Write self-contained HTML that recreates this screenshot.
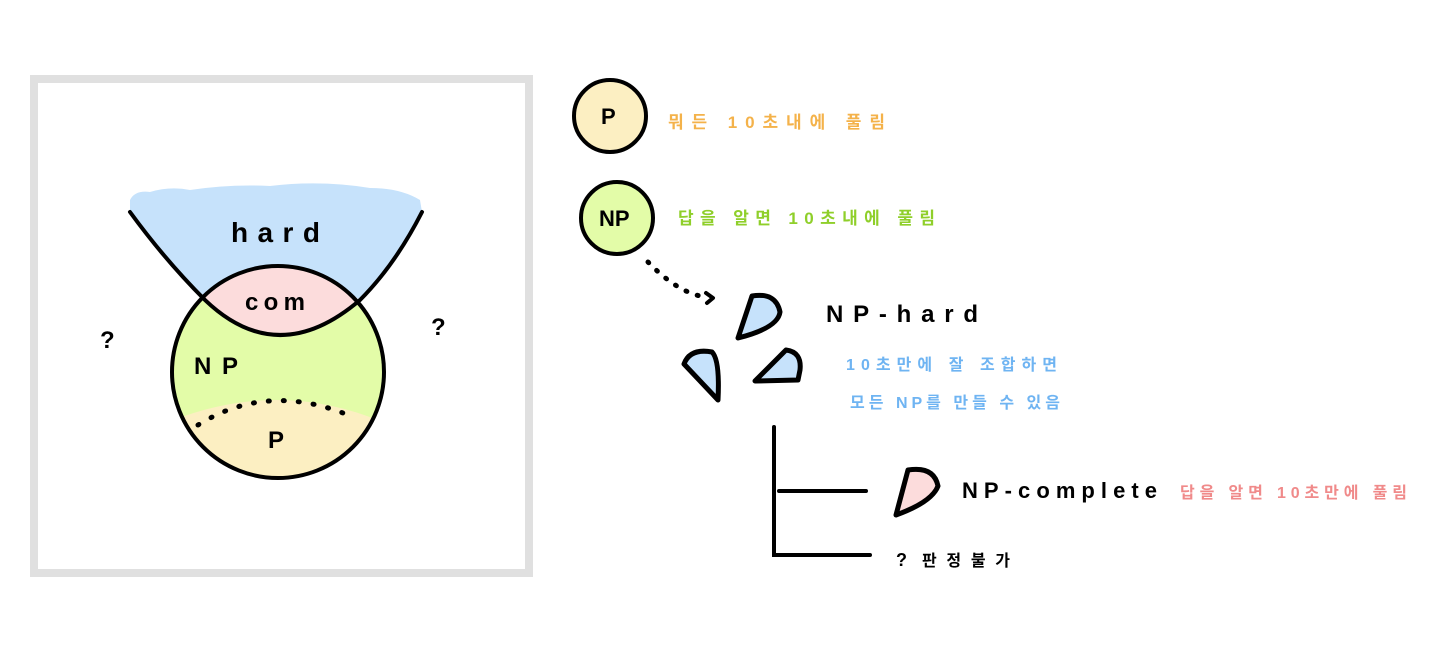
<!DOCTYPE html>
<html><head><meta charset="utf-8"><style>
html,body{margin:0;padding:0;background:#fff;width:1440px;height:657px;overflow:hidden}
svg{display:block}
text{font-family:"Liberation Sans","Noto Sans CJK KR",sans-serif;font-weight:bold}
</style></head><body>
<svg width="1440" height="657" viewBox="0 0 1440 657">
<rect x="34" y="79" width="495" height="494" fill="none" stroke="#e0e0e0" stroke-width="8"/>
<defs><clipPath id="c"><circle cx="278" cy="372" r="106"/></clipPath></defs>
<path d="M130 200 Q135 190 150 192 Q170 186 190 190 Q230 184 270 186 Q320 180 370 188 Q400 188 420 200 L422 212 Q390 270 360 300 Q320 270 278 266 Q236 266 205 300 Q160 250 130 212 Z" fill="#c6e2fb"/>
<circle cx="278" cy="372" r="106" fill="#e3fca8"/>
<g clip-path="url(#c)">
<path d="M150 430 Q278 370 400 430 L400 500 L150 500 Z" fill="#fcefc2"/>
<path d="M150 250 L205 300 Q278 370 360 300 L420 250 Z" fill="#fcdcdc"/>
</g>
<circle cx="278" cy="372" r="106" fill="none" stroke="#000" stroke-width="4"/>
<path d="M130 212 Q165 260 205 300 Q278 370 360 300 Q395 265 422 212" fill="none" stroke="#000" stroke-width="4" stroke-linecap="round"/>
<path d="M198 425 Q270 380 355 418" fill="none" stroke="#000" stroke-width="5" stroke-dasharray="1 14" stroke-linecap="round"/>
<text x="231" y="242" font-size="28" textLength="89" lengthAdjust="spacing">hard</text>
<text x="245" y="310" font-size="24" textLength="60" lengthAdjust="spacing">com</text>
<text x="194" y="374" font-size="24" textLength="44" lengthAdjust="spacing">NP</text>
<text x="268" y="448" font-size="24">P</text>
<text x="100" y="348" font-size="24">?</text>
<text x="431" y="335" font-size="24">?</text>
<circle cx="610" cy="116" r="36" fill="#fcefc2" stroke="#000" stroke-width="4"/>
<text x="601" y="124" font-size="22">P</text>
<text x="668" y="128" font-size="17" fill="#f4b24a" textLength="217" lengthAdjust="spacing">뭐든 10초내에 풀림</text>
<circle cx="617" cy="218" r="36" fill="#e3fca8" stroke="#000" stroke-width="4"/>
<text x="599" y="226" font-size="22">NP</text>
<text x="678" y="224" font-size="17" fill="#8fcf2a" textLength="257" lengthAdjust="spacing">답을 알면 10초내에 풀림</text>
<path d="M648 262 Q675 290 700 296" fill="none" stroke="#000" stroke-width="5" stroke-dasharray="1 11" stroke-linecap="round"/>
<path d="M706 293 L713 298 L707 303" fill="none" stroke="#000" stroke-width="4" stroke-linecap="round" stroke-linejoin="round"/>
<g stroke="#000" stroke-width="5" fill="#c6e2fb" stroke-linejoin="round">
<path d="M738 338 L752 296 Q776 292 780 312 Q778 328 738 338 Z"/>
<path d="M684 364 Q690 348 712 352 Q720 360 718 400 Z"/>
<path d="M755 381 L786 350 Q802 352 800 370 L798 380 Z"/>
</g>
<text x="826" y="322" font-size="24" textLength="152" lengthAdjust="spacing">NP-hard</text>
<text x="846" y="370" font-size="16" fill="#6fb4f2" textLength="211" lengthAdjust="spacing">10초만에 잘 조합하면</text>
<text x="850" y="408" font-size="16" fill="#6fb4f2" textLength="210" lengthAdjust="spacing">모든 NP를 만들 수 있음</text>
<path d="M774 427 L774 555 L870 555 M779 491 L866 491" fill="none" stroke="#000" stroke-width="4" stroke-linecap="round"/>
<path d="M896 515 L908 470 Q934 466 938 486 Q932 502 896 515 Z" fill="#fcdcdc" stroke="#000" stroke-width="5" stroke-linejoin="round"/>
<text x="962" y="498" font-size="22" textLength="195" lengthAdjust="spacing">NP-complete</text>
<text x="1180" y="498" font-size="16" fill="#f08a8a" textLength="227" lengthAdjust="spacing">답을 알면 10초만에 풀림</text>
<text x="896" y="566" font-size="18">?</text>
<text x="922" y="566" font-size="16" textLength="88" lengthAdjust="spacing">판정불가</text>
</svg>
</body></html>
